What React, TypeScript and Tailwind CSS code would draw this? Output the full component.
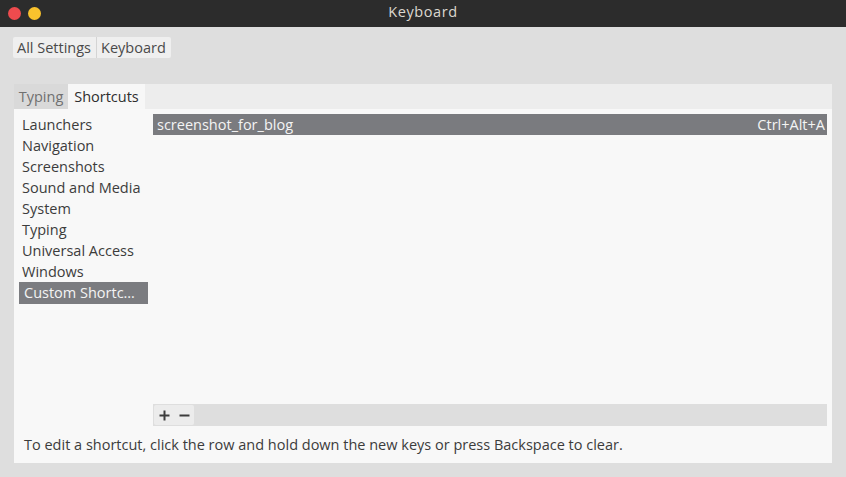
const categories = [
  'Launchers',
  'Navigation',
  'Screenshots',
  'Sound and Media',
  'System',
  'Typing',
  'Universal Access',
  'Windows',
];

export default function App() {
  return (
    <div
      className="w-[846px] h-[477px] bg-[#dedede] flex flex-col overflow-hidden text-[14.5px] text-[#3c3c3c]"
      style={{ fontFamily: '"Open Sans", "Liberation Sans", sans-serif' }}
    >
      {/* title bar */}
      <div className="relative h-[27px] bg-[#2c2c2c] flex items-center pl-[8px] gap-[7px] shrink-0">
        <span className="w-[13px] h-[13px] rounded-full bg-[#ee4b4e]" />
        <span className="w-[13px] h-[13px] rounded-full bg-[#f9c22d]" />
        <span className="absolute inset-0 pb-[3px] flex items-center justify-center text-[#dcd8d0] tracking-[0.6px]">
          Keyboard
        </span>
      </div>

      {/* breadcrumb */}
      <div className="mt-[10px] ml-[13px] flex h-[21px] w-fit rounded-[2px] bg-[#efefef] text-[#4a4a4a]">
        <div className="pl-[4px] pr-[5px] flex items-center border-r border-[#d4d4d4]">All Settings</div>
        <div className="pl-[4px] pr-[5px] flex items-center">Keyboard</div>
      </div>

      {/* panel */}
      <div className="mt-[26px] ml-[14px] w-[818px] h-[379px] flex flex-col">
        <div className="h-[25px] bg-[#ededed] flex shrink-0">
          <div className="w-[54px] bg-[#d9d9d9] text-[#707070] flex items-center justify-center">Typing</div>
          <div className="w-[77px] bg-[#f7f7f7] text-[#2e2e2e] flex items-center justify-center">Shortcuts</div>
        </div>

        <div className="flex-1 bg-[#f8f8f8] flex flex-col">
          <div className="flex-1 flex pt-[5px]">
            <div className="w-[139px] pl-[5px] pr-[5px]">
              {categories.map((c) => (
                <div key={c} className="h-[21px] flex items-center pl-[3px]">
                  {c}
                </div>
              ))}
              <div className="h-[22px] flex items-center pl-[5px] bg-[#7b7c80] text-[#f4f4f4] whitespace-nowrap">
                Custom Shortc…
              </div>
            </div>

            <div className="flex-1 flex flex-col pr-[5px]">
              <div className="flex-1">
                <div className="h-[21px] bg-[#7a7b7f] text-[#f4f4f4] flex items-center justify-between pl-[4px] pr-[2px]">
                  <span>screenshot_for_blog</span>
                  <span>Ctrl+Alt+A</span>
                </div>
              </div>
              <div className="h-[22px] bg-[#dedede] flex items-center">
                <div className="h-[20px] ml-[1px] w-[40px] bg-[#ececec] rounded-[2px] flex items-center justify-around text-[#3c3c3c]">
                  <svg width="11" height="11" viewBox="0 0 11 11">
                    <path d="M5.5 0.5v10M0.5 5.5h10" stroke="#3c3c3c" strokeWidth="2" />
                  </svg>
                  <svg width="11" height="11" viewBox="0 0 11 11">
                    <path d="M0.5 5.5h10" stroke="#3c3c3c" strokeWidth="2" />
                  </svg>
                </div>
              </div>
            </div>
          </div>

          <div className="h-[37px] flex items-center pl-[10px] text-[#3c3c3c]">
            To edit a shortcut, click the row and hold down the new keys or press Backspace to clear.
          </div>
        </div>
      </div>
    </div>
  );
}
